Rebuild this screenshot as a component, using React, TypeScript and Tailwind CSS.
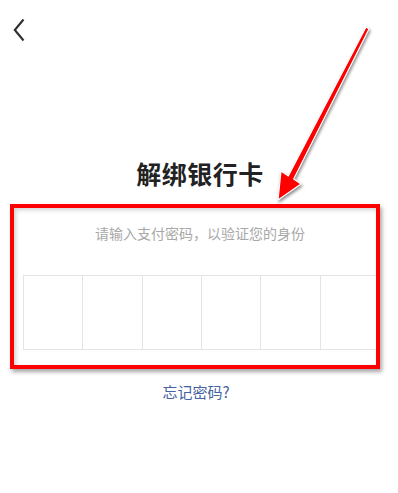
import React from "react";

export default function App() {
  const cells = [0, 1, 2, 3, 4, 5];
  return (
    <div
      className="relative w-[398px] h-[493px] overflow-hidden bg-white"
      style={{ fontFamily: '"Noto Sans CJK SC", "Noto Sans", sans-serif' }}
    >
      <div className="flex pl-[13px] pt-[18px]">
        <svg width="12" height="24" viewBox="0 0 12 24" fill="none">
          <path d="M10.5 1.5 L1.8 12 L10.5 22.5" stroke="#2e2e2e" strokeWidth="2.1" strokeLinejoin="miter" />
        </svg>
      </div>

      <div className="mt-[115px] flex justify-center pl-[2px]">
        <h1 className="text-[25px] leading-[32px] font-bold text-[#222] tracking-[0.5px]">解绑银行卡</h1>
      </div>

      <div className="ml-[10px] mt-[15px] w-[370px] h-[165px] overflow-hidden border-4 border-[#ff0000] shadow-[2px_3px_4px_rgba(0,0,0,0.35),inset_2px_2px_4px_rgba(0,0,0,0.18)]">
        <div className="flex justify-center pl-[10px] pt-[15px]">
          <p className="text-[14px] leading-[20px] text-[#a8a8a8]">请输入支付密码，以验证您的身份</p>
        </div>
        <div className="ml-[9px] mt-[32px] grid w-[358px] h-[75px] grid-cols-6 border border-[#e4e4e4] bg-white">
          {cells.map((i) => (
            <div key={i} className={i < 5 ? "border-r border-[#e4e4e4]" : ""} />
          ))}
        </div>
      </div>

      <div className="mt-[13px] flex justify-center pr-[6px]">
        <span className="text-[15px] leading-[20px] text-[#44629e]">忘记密码?</span>
      </div>

      <svg
        className="pointer-events-none absolute left-0 top-0 drop-shadow-[1px_2px_1.5px_rgba(0,0,0,0.45)]"
        width="398"
        height="493"
        viewBox="0 0 398 493"
      >
        <polygon
          points="366,27 369,29 293.7,179 301,184 278,200 281,171 288.3,176"
          fill="#ff0000"
          stroke="#ffffff"
          strokeWidth="1.2"
          strokeLinejoin="round"
        />
      </svg>
    </div>
  );
}
